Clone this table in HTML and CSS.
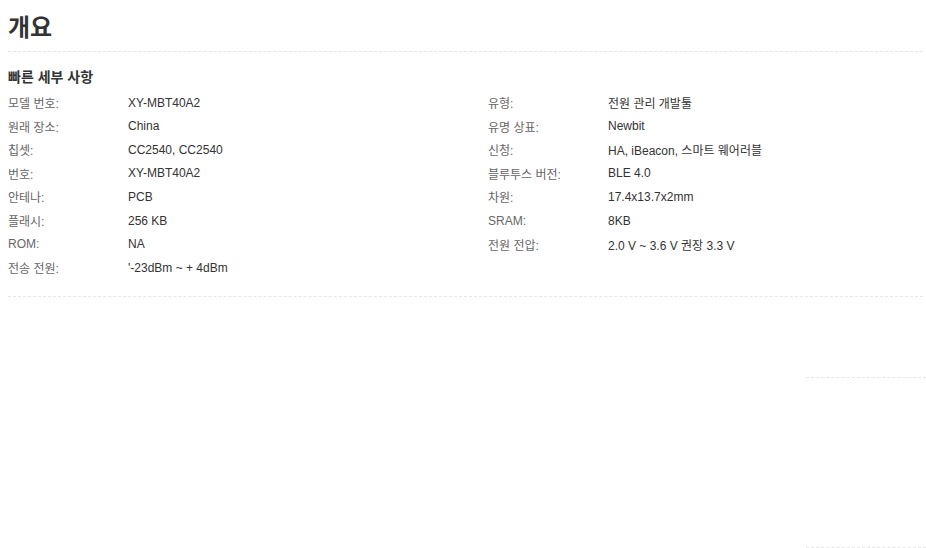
FILE: index.html
```html
<!DOCTYPE html>
<html lang="ko">
<head>
<meta charset="utf-8">
<title>개요</title>
<link rel="stylesheet" href="styles.css">
</head>
<body>
<div class="page">
  <section class="overview">
    <h1 class="title">개요</h1>
    <div class="details">
      <h2 class="subtitle">빠른 세부 사항</h2>
      <div class="grid">
        <div class="col">
          <div class="row"><span class="label">모델 번호:</span><span class="value">XY-MBT40A2</span></div>
          <div class="row"><span class="label">원래 장소:</span><span class="value">China</span></div>
          <div class="row"><span class="label">칩셋:</span><span class="value">CC2540, CC2540</span></div>
          <div class="row"><span class="label">번호:</span><span class="value">XY-MBT40A2</span></div>
          <div class="row"><span class="label">안테나:</span><span class="value">PCB</span></div>
          <div class="row"><span class="label">플래시:</span><span class="value">256 KB</span></div>
          <div class="row"><span class="label">ROM:</span><span class="value">NA</span></div>
          <div class="row"><span class="label">전송 전원:</span><span class="value">'-23dBm ~ + 4dBm</span></div>
        </div>
        <div class="col">
          <div class="row"><span class="label">유형:</span><span class="value">전원 관리 개발툴</span></div>
          <div class="row"><span class="label">유명 상표:</span><span class="value">Newbit</span></div>
          <div class="row"><span class="label">신청:</span><span class="value">HA, iBeacon, 스마트 웨어러블</span></div>
          <div class="row"><span class="label">블루투스 버전:</span><span class="value">BLE 4.0</span></div>
          <div class="row"><span class="label">차원:</span><span class="value">17.4x13.7x2mm</span></div>
          <div class="row"><span class="label">SRAM:</span><span class="value">8KB</span></div>
          <div class="row"><span class="label">전원 전압:</span><span class="value">2.0 V ~ 3.6 V 권장 3.3 V</span></div>
        </div>
      </div>
    </div>
  </section>
  <aside class="side-box"></aside>
</div>
</body>
</html>
```
FILE: styles.css
```css
html, body {
  margin: 0;
  padding: 0;
  background: #fff;
}
body {
  font-family: "Liberation Sans", Arial, "Noto Sans CJK KR", sans-serif;
  color: #333;
  overflow: hidden;
}
.page {
  padding-left: 8px;
  width: 915px;
}
.title {
  margin: 0;
  padding-top: 13px;
  height: 38px;
  font-size: 24px;
  line-height: 30px;
  font-weight: bold;
  color: #333;
  border-bottom: 1px dashed #e6e6e6;
}
.details {
  padding-top: 15px;
  padding-bottom: 17px;
  border-bottom: 1px dashed #e6e6e6;
}
.subtitle {
  margin: 0 0 4px;
  font-size: 14px;
  line-height: 20px;
  font-weight: bold;
  color: #333;
}
.grid {
  display: grid;
  grid-template-columns: 480px 1fr;
}
.row {
  display: flex;
  height: 23.55px;
  align-items: center;
  font-size: 12px;
}
.label {
  width: 120px;
  flex: none;
  color: #666;
}
.value {
  color: #333;
}
.side-box {
  margin-left: 798px;
  margin-top: 80px;
  height: 169px;
  width: 120px;
  border-top: 1px dashed #e6e6e6;
  border-bottom: 1px dashed #e6e6e6;
}
```
